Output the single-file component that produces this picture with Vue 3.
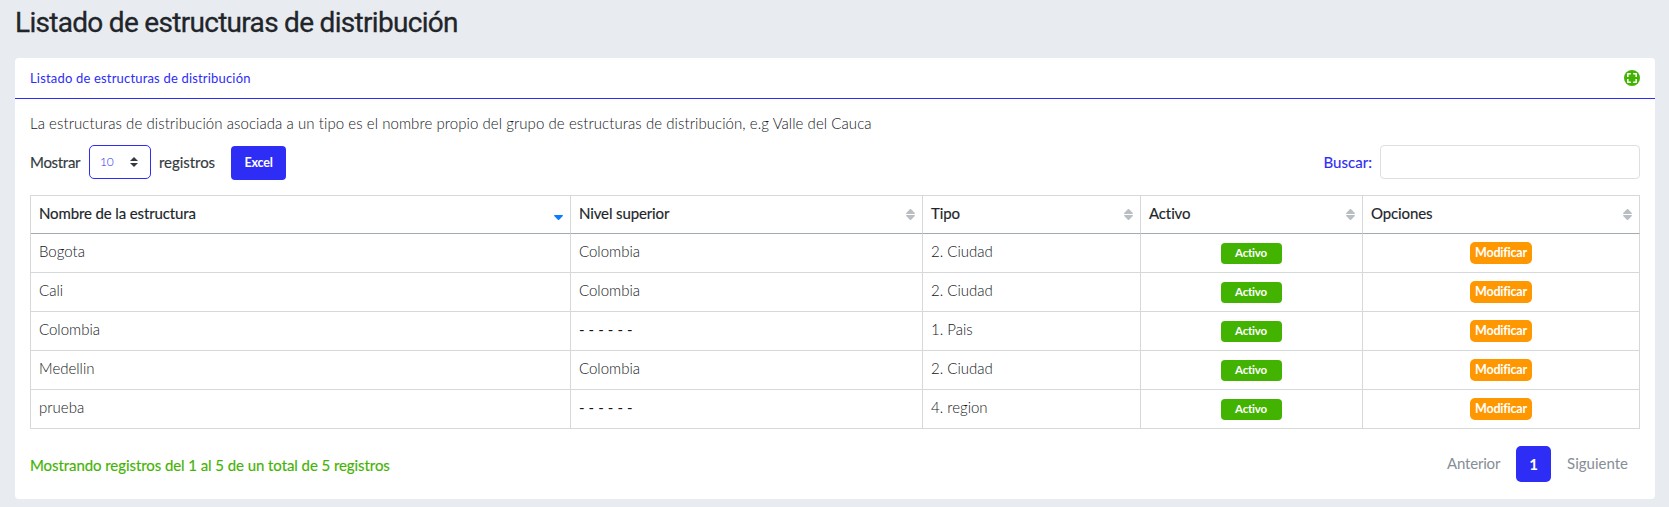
<script setup>
const columns = [
  { label: 'Nombre de la estructura', key: 'c1', sorted: true },
  { label: 'Nivel superior', key: 'c2' },
  { label: 'Tipo', key: 'c3' },
  { label: 'Activo', key: 'c4' },
  { label: 'Opciones', key: 'c5' },
]
const rows = [
  { name: 'Bogota', parent: 'Colombia', type: '2. Ciudad' },
  { name: 'Cali', parent: 'Colombia', type: '2. Ciudad' },
  { name: 'Colombia', parent: '', type: '1. Pais' },
  { name: 'Medellin', parent: 'Colombia', type: '2. Ciudad' },
  { name: 'prueba', parent: '', type: '4. region' },
]
</script>

<template>
  <main class="page">
    <h1 class="title">Listado de estructuras de distribución</h1>
    <section class="card">
      <header class="card-header">
        <span class="card-title">Listado de estructuras de distribución</span>
        <svg class="expand" viewBox="0 0 16 16" width="16" height="16">
          <circle cx="8" cy="8" r="8" fill="#43b302" />
          <path d="M3.8 6.9V3.8h3.1M9.1 3.8h3.1v3.1M12.2 9.1v3.1H9.1M6.9 12.2H3.8V9.1" fill="none" stroke="#fff" stroke-width="1.6" stroke-linejoin="round" />
        </svg>
      </header>
      <div class="card-body">
        <p class="desc">La estructuras de distribución asociada a un tipo es el nombre propio del grupo de estructuras de distribución, e.g Valle del Cauca</p>
        <div class="toolbar">
          <span class="show">Mostrar</span>
          <div class="select">
            <span>10</span>
            <svg viewBox="0 0 8 10" width="8" height="10"><path d="M4 0L8 4H0zM4 10L0 6h8z" fill="#343a40" /></svg>
          </div>
          <span class="records">registros</span>
          <button class="excel">Excel</button>
          <label class="search"><span>Buscar:</span><input type="text" /></label>
        </div>
        <table class="grid">
          <colgroup><col v-for="c in columns" :key="c.key" :class="c.key" /></colgroup>
          <thead>
            <tr>
              <th v-for="c in columns" :key="c.key">
                <div class="head">
                  <span>{{ c.label }}</span>
                  <svg class="sort" viewBox="0 0 9 11" width="9" height="11">
                    <path v-if="!c.sorted" d="M4.1 0h.8L8.8 4v1H.2V4z" fill="#b9bec3" />
                    <path d="M4.1 11h.8L8.8 7V6H.2v1z" :fill="c.sorted ? '#0a7cff' : '#b9bec3'" />
                  </svg>
                </div>
              </th>
            </tr>
          </thead>
          <tbody>
            <tr v-for="r in rows" :key="r.name">
              <td>{{ r.name }}</td>
              <td><span v-if="r.parent">{{ r.parent }}</span><span v-else class="dashes">- - - - - -</span></td>
              <td>{{ r.type }}</td>
              <td class="center"><span class="badge">Activo</span></td>
              <td class="center"><button class="edit">Modificar</button></td>
            </tr>
          </tbody>
        </table>
        <footer class="footer">
          <span class="info">Mostrando registros del 1 al 5 de un total de 5 registros</span>
          <nav class="pager">
            <span class="prev">Anterior</span>
            <span class="current">1</span>
            <span class="next">Siguiente</span>
          </nav>
        </footer>
      </div>
    </section>
  </main>
</template>

<style>
body { background: #e8ebf0; }
</style>

<style scoped>
* { box-sizing: border-box; }
.page {
  height: 507px;
  padding: 0 14px 0 15px;
  overflow: hidden;
  background: #e8ebf0;
  font: 400 15px/22px Lato, "Liberation Sans", sans-serif;
  color: #343a40;
}
.title {
  margin: 0;
  height: 58px;
  padding-top: 6px;
  font: 400 28px/34px Roboto, sans-serif;
  letter-spacing: -0.7px;
  -webkit-text-stroke: 0.3px #212529;
  color: #212529;
}
.card { height: 441px; border-radius: 4px; background: #fff; }
.card-header {
  display: flex;
  align-items: center;
  justify-content: space-between;
  height: 41px;
  padding: 0 15px;
  border-bottom: 1px solid #2d2df5;
}
.card-title { font-size: 13px; letter-spacing: 0.18px; color: #2d2df5; }
.card-body { padding: 13px 15px 0; }
.desc {
  margin: 0;
  height: 32px;
  font-weight: 300;
  letter-spacing: 0.067px;
  white-space: nowrap;
  color: #14171a;
}
.toolbar { display: flex; align-items: center; height: 36px; letter-spacing: -0.1px; }
.show { width: 59px; letter-spacing: -0.3px; }
.select {
  display: flex;
  align-items: center;
  justify-content: space-between;
  width: 62px;
  height: 34px;
  margin-right: 8px;
  padding: 0 12px 0 10px;
  border: 1px solid #2d2df5;
  border-radius: 5px;
  font-size: 12px;
  font-weight: 300;
  color: #2d2df5;
}
.records { width: 72px; letter-spacing: -0.05px; }
.excel {
  width: 55px;
  height: 34px;
  margin-top: 2px;
  padding: 0;
  border: 0;
  border-radius: 4px;
  background: #2d2df5;
  color: #fff;
  font: 700 12.5px/20px Lato, sans-serif;
  letter-spacing: -0.2px;
}
.search { display: flex; align-items: center; margin-left: auto; gap: 8px; letter-spacing: 0.05px; color: #2d2df5; }
.search input { width: 260px; height: 34px; border: 1px solid #dedfe1; border-radius: 4px; background: #fff; }
.show, .records, .search span, .info { -webkit-text-stroke: 0.15px currentColor; }
.grid {
  width: 1610px;
  margin-top: 15px;
  table-layout: fixed;
  border-collapse: separate;
  border-spacing: 0;
  border: solid #d5d9dc;
  border-width: 1px 0 0 1px;
}
.c1 { width: 540px; }
.c2 { width: 352px; }
.c3 { width: 218px; }
.c4 { width: 222px; }
.c5 { width: 277px; }
th, td {
  padding: 0 8px;
  border: solid #d5d9dc;
  border-width: 0 1px 1px 0;
  text-align: left;
  vertical-align: top;
}
th {
  height: 38px;
  padding-top: 6px;
  font-weight: 400;
  letter-spacing: -0.12px;
  color: #212529;
  -webkit-text-stroke: 0.15px currentColor;
  border-bottom-color: #a4aab3;
}
td { height: 39px; padding-top: 6px; font-weight: 300; color: #14171a; }
.head { display: flex; justify-content: space-between; }
.sort { margin-top: 7px; margin-right: -1px; }
.dashes { font-weight: 400; letter-spacing: 0.1px; }
td.center { padding-top: 8px; text-align: center; }
.badge, .edit {
  display: inline-block;
  padding: 0;
  border: 0;
  color: #fff;
  font: 700 11.5px/20px Lato, sans-serif;
  letter-spacing: -0.2px;
  vertical-align: top;
}
.badge { width: 61px; height: 21px; margin: 1px 1px 0 0; border-radius: 4px; background: #43b302; }
.edit { width: 62px; height: 22px; border-radius: 5px; background: #ff9800; font-size: 12.5px; }
.footer { display: flex; justify-content: space-between; padding-top: 17px; }
.info { padding-top: 8px; letter-spacing: -0.07px; color: #43b302; }
.pager { display: flex; padding-right: 12px; line-height: 34px; color: #868e96; }
.prev { width: 69px; letter-spacing: -0.2px; }
.current {
  width: 35px;
  height: 36px;
  margin-right: 16px;
  border-radius: 5px;
  background: #2d2df5;
  color: #fff;
  font-weight: 700;
  line-height: 36px;
  text-align: center;
}
</style>
